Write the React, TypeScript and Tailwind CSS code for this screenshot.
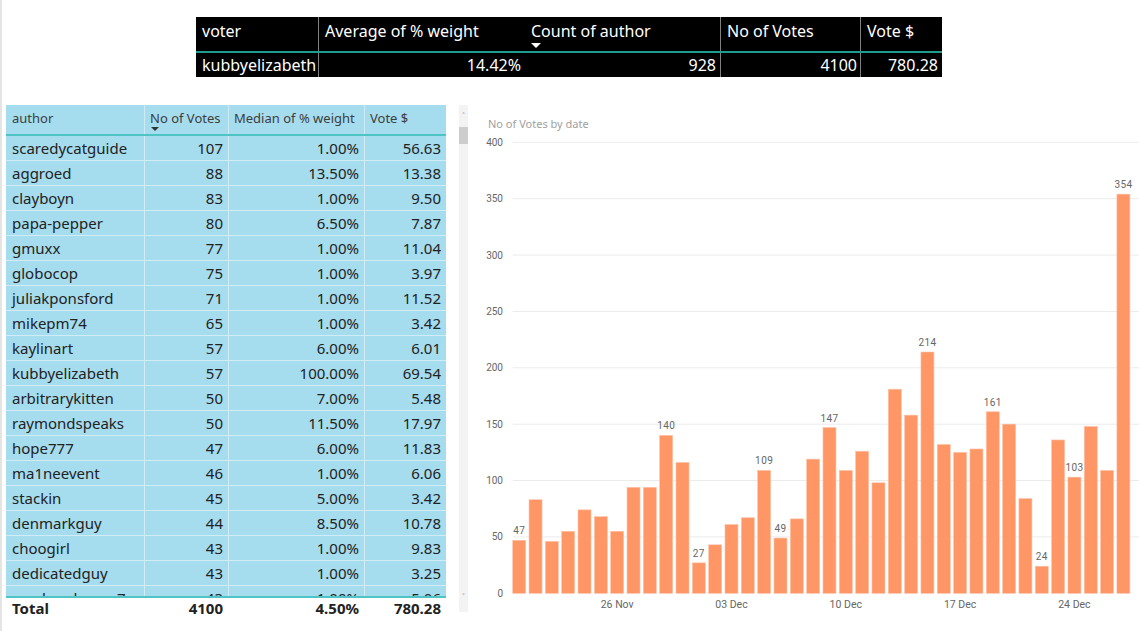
import React from "react";

const rows: [string, string, string, string][] = [
  ["scaredycatguide", "107", "1.00%", "56.63"],
  ["aggroed", "88", "13.50%", "13.38"],
  ["clayboyn", "83", "1.00%", "9.50"],
  ["papa-pepper", "80", "6.50%", "7.87"],
  ["gmuxx", "77", "1.00%", "11.04"],
  ["globocop", "75", "1.00%", "3.97"],
  ["juliakponsford", "71", "1.00%", "11.52"],
  ["mikepm74", "65", "1.00%", "3.42"],
  ["kaylinart", "57", "6.00%", "6.01"],
  ["kubbyelizabeth", "57", "100.00%", "69.54"],
  ["arbitrarykitten", "50", "7.00%", "5.48"],
  ["raymondspeaks", "50", "11.50%", "17.97"],
  ["hope777", "47", "6.00%", "11.83"],
  ["ma1neevent", "46", "1.00%", "6.06"],
  ["stackin", "45", "5.00%", "3.42"],
  ["denmarkguy", "44", "8.50%", "10.78"],
  ["choogirl", "43", "1.00%", "9.83"],
  ["dedicatedguy", "43", "1.00%", "3.25"],
  ["sarahmahoney7", "43", "1.00%", "5.06"],
];

const values = [
  47, 83, 46, 55, 74, 68, 55, 94, 94, 140, 116, 27, 43, 61, 67, 109, 49, 66, 119,
  147, 109, 126, 98, 181, 158, 214, 132, 125, 128, 161, 150, 84, 24, 136, 103, 148,
  109, 354,
];
const labeled = new Set([0, 9, 11, 15, 16, 19, 25, 29, 32, 34, 37]);
const xLabels: [number, string][] = [
  [6, "26 Nov"],
  [13, "03 Dec"],
  [20, "10 Dec"],
  [27, "17 Dec"],
  [34, "24 Dec"],
];

const FONT = { fontFamily: "'Noto Sans', 'Open Sans', sans-serif" };

function Chart() {
  const x0 = 42.7;
  const pitch = 16.33;
  const bw = 13;
  const y0 = 462.3;
  const k = 1.1275;
  const ticks = [0, 50, 100, 150, 200, 250, 300, 350, 400];
  return (
    <svg width={669} height={500} className="block" style={{ fontFamily: "Roboto, 'DejaVu Sans', sans-serif" }}>
      {ticks.map((t) => {
        const y = y0 - t * k;
        return (
          <g key={t}>
            {t > 0 && <line x1={x0} x2={669} y1={y} y2={y} stroke="#ebebeb" strokeWidth={1} />}
            <text x={33} y={y + 3.5} textAnchor="end" fontSize={10} fill="#666">
              {t}
            </text>
          </g>
        );
      })}
      {values.map((v, i) => {
        const x = x0 + i * pitch;
        const top = y0 - v * k;
        return (
          <g key={i}>
            <rect x={x} y={top} width={bw} height={v * k} fill="#fe9666" stroke="#ffc2a6" strokeWidth={0.6} />
            {labeled.has(i) && (
              <text x={x + bw / 2} y={top - 6} textAnchor="middle" fontSize={10} fill="#666" letterSpacing={0.4}>
                {v}
              </text>
            )}
          </g>
        );
      })}
      {xLabels.map(([i, l]) => (
        <text key={l} x={x0 + i * pitch + bw / 2} y={477} textAnchor="middle" fontSize={10.5} fill="#666">
          {l}
        </text>
      ))}
    </svg>
  );
}

function SortArrow() {
  return (
    <svg width={10} height={6} className="block">
      <polygon points="0,0 10,0 5,5" fill="currentColor" />
    </svg>
  );
}

export default function App() {
  return (
    <div className="w-[1139px] h-[631px] bg-white overflow-hidden border-l-2 border-[#e4e4e4]" style={FONT}>
      {/* top summary table */}
      <div className="pt-[17px] pl-[194px]">
        <div className="w-[746px] bg-black text-white text-[16px]">
          <div className="grid grid-cols-[122px_207px_195px_140px_82px] h-[36px] border-b-2 border-[#1f9c8c]">
            <div className="pl-[6px] pt-[4px] leading-[20px]">voter</div>
            <div className="pl-[6px] pt-[4px] leading-[20px] border-l border-[#808080]">Average of % weight</div>
            <div className="pl-[6px] pt-[4px] leading-[20px]">
              <div>Count of author</div>
              <div className="mt-[2px] ml-[0px] text-white">
                <SortArrow />
              </div>
            </div>
            <div className="pl-[6px] pt-[4px] leading-[20px] border-l border-[#808080]">No of Votes</div>
            <div className="pl-[6px] pt-[4px] leading-[20px] border-l border-[#808080]">Vote $</div>
          </div>
          <div className="grid grid-cols-[122px_207px_195px_140px_82px] h-[24px] leading-[24px]">
            <div className="pl-[6px]">kubbyelizabeth</div>
            <div className="pr-[4px] text-right border-l border-[#808080]">14.42%</div>
            <div className="pr-[4px] text-right">928</div>
            <div className="pr-[3px] text-right border-l border-[#808080]">4100</div>
            <div className="pr-[4px] text-right border-l border-[#808080]">780.28</div>
          </div>
        </div>
      </div>

      <div className="flex mt-[28px]">
        {/* left table */}
        <div className="ml-[4px] w-[440px] flex flex-col">
          <div className="bg-[#a5dcee]">
            <div className="grid grid-cols-[138px_84px_136px_82px] h-[31px] border-b-2 border-[#4fc4c4] text-[13px] text-[#3d3d3d] leading-[18px]">
              <div className="pl-[6px] pt-[4px]">author</div>
              <div className="pl-[5px] pt-[4px] border-l border-[#cdebf4]">
                <div>No of Votes</div>
                <div className="text-[#333] ml-[1px] mt-[0px]">
                  <svg width={8} height={5} className="block">
                    <polygon points="0,0 8,0 4,4" fill="currentColor" />
                  </svg>
                </div>
              </div>
              <div className="pl-[5px] pt-[4px] border-l border-[#cdebf4]">Median of % weight</div>
              <div className="pl-[5px] pt-[4px] border-l border-[#cdebf4]">Vote $</div>
            </div>
            <div className="h-[460px] overflow-hidden">
              {rows.map((r) => (
                <div
                  key={r[0]}
                  className="grid grid-cols-[138px_84px_136px_82px] h-[25px] border-b border-[#d2ecf5] text-[15px] text-[#222] leading-[24px]"
                >
                  <div className="pl-[6px] whitespace-nowrap overflow-hidden">{r[0]}</div>
                  <div className="pr-[5px] text-right border-l border-[#d2ecf5]">{r[1]}</div>
                  <div className="pr-[5px] text-right border-l border-[#d2ecf5]">{r[2]}</div>
                  <div className="pr-[5px] text-right border-l border-[#d2ecf5]">{r[3]}</div>
                </div>
              ))}
            </div>
          </div>
          <div className="grid grid-cols-[138px_84px_136px_82px] border-t-2 border-[#4fc4c4] h-[22px] leading-[20px] text-[15px] font-bold text-[#222]">
            <div className="pl-[6px]">Total</div>
            <div className="pr-[5px] text-right">4100</div>
            <div className="pr-[5px] text-right">4.50%</div>
            <div className="pr-[5px] text-right">780.28</div>
          </div>
        </div>

        {/* scrollbar */}
        <div className="ml-[13px] w-[9px] h-[507px] bg-[#f3f3f3] flex flex-col items-center">
          <div className="h-[22px] text-[9px] leading-[22px] text-[#888]">˄</div>
          <div className="w-[9px] h-[17px] bg-[#cdcdcd]" />
          <div className="flex-1" />
          <div className="h-[22px] text-[9px] leading-[14px] text-[#888]">˅</div>
        </div>

        {/* chart */}
        <div className="ml-[2px] w-[669px] flex flex-col">
          <div className="pl-[18px] pt-[12px] h-[26px] text-[11px] leading-[14px] text-[#a0a0a0]">No of Votes by date</div>
          <Chart />
        </div>
      </div>
    </div>
  );
}
